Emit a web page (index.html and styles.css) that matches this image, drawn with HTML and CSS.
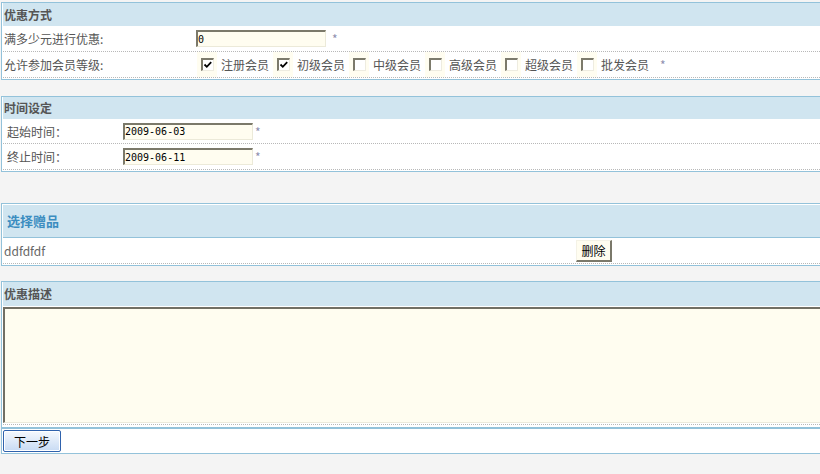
FILE: index.html
```html
<!DOCTYPE html>
<html lang="zh-CN">
<head>
<meta charset="utf-8">
<title>优惠设置</title>
<link rel="stylesheet" href="styles.css">
</head>
<body>
<div class="page">
  <div class="box box1">
    <div class="head">优惠方式</div>
    <div class="row r26">
      <div class="label lab1">满多少元进行优惠:</div>
      <div class="field"><input class="txt" value="0"><span class="req">*</span></div>
    </div>
    <div class="row r26">
      <div class="label lab1b">允许参加会员等级:</div>
      <div class="field levels">
        <span class="cbwrap"><span class="cb"><svg width="10" height="10" viewBox="0 0 10 10"><polyline points="1.5,4.5 3.8,6.8 8.2,2.2" fill="none" stroke="#000" stroke-width="1.8"/></svg></span></span><span class="lv">注册会员</span>
        <span class="cbwrap"><span class="cb"><svg width="10" height="10" viewBox="0 0 10 10"><polyline points="1.5,4.5 3.8,6.8 8.2,2.2" fill="none" stroke="#000" stroke-width="1.8"/></svg></span></span><span class="lv">初级会员</span>
        <span class="cbwrap"><span class="cb"></span></span><span class="lv">中级会员</span>
        <span class="cbwrap"><span class="cb"></span></span><span class="lv">高级会员</span>
        <span class="cbwrap"><span class="cb"></span></span><span class="lv">超级会员</span>
        <span class="cbwrap"><span class="cb"></span></span><span class="lv">批发会员</span>
        <span class="req req-lv">*</span>
      </div>
    </div>
  </div>

  <div class="box box2">
    <div class="head head22">时间设定</div>
    <div class="row r25">
      <div class="label lab2">起始时间：</div>
      <div class="field"><input class="txt" value="2009-06-03"><span class="req req2">*</span></div>
    </div>
    <div class="row r26">
      <div class="label lab2">终止时间：</div>
      <div class="field"><input class="txt" value="2009-06-11"><span class="req req2">*</span></div>
    </div>
  </div>

  <div class="box box3">
    <div class="head head-gift">选择赠品</div>
    <div class="row r26">
      <div class="label lab3">ddfdfdf</div>
      <div class="field"><button class="del" type="button">删除</button></div>
    </div>
  </div>

  <div class="box box4">
    <div class="head head24">优惠描述</div>
    <div class="desc"><textarea class="area"></textarea></div>
  </div>

  <div class="box box5">
    <div class="row r24"><button class="next" type="button">下一步</button></div>
  </div>
</div>
</body>
</html>
```

FILE: styles.css
```css
html, body {
  margin: 0;
  padding: 0;
}
body {
  background: #f4f4f4;
  font: 12px "Noto Sans CJK SC", "Liberation Sans", sans-serif;
  color: #555;
  overflow: hidden;
}
.page {
  width: 830px;
}
.box {
  margin-left: 1px;
  border: 1px solid #93c2da;
  background: #fff;
  padding: 0 1px 1px 1px;
}
.box1 { margin-top: 2px; }
.box2 { margin-top: 16px; }
.box3 { margin-top: 31px; padding-top: 1px; }
.box4 { margin-top: 15px; padding-bottom: 2px; }
.box5 { padding-bottom: 0; border-top-width: 1px; }

.head {
  background: #d0e5f0;
  font-weight: bold;
  color: #555;
  height: 23px;
  line-height: 23px;
  padding-left: 1px;
}
.head22 { height: 22px; line-height: 22px; }
.head24 { height: 24px; line-height: 24px; }
.head-gift {
  height: 33px;
  line-height: 32px;
  box-sizing: border-box;
  border-bottom: 1px solid #93c2da;
  padding-left: 4px;
  color: #3b8dc0;
  font-size: 13px;
}

.row {
  display: flex;
  align-items: center;
  box-sizing: border-box;
  border-bottom: 1px dotted #b8b8b8;
}
.r26 { height: 26px; }
.r25 { height: 25px; }
.r24 { height: 24px; border-bottom: 0; }

.label {
  flex: none;
  box-sizing: border-box;
  padding-left: 1px;
  white-space: nowrap;
}
.lab1 { width: 193px; }
.lab1b { width: 194px; }
.lab2 { width: 120px; padding-left: 4px; }
.lab3 { width: 573px; color: #666; }

.field {
  display: flex;
  align-items: center;
}

.txt {
  box-sizing: border-box;
  width: 130px;
  height: 17px;
  margin: 0;
  padding: 0;
  border-style: solid;
  border-width: 2px 1px 1px 2px;
  border-color: #7b796a #ecead9 #ecead9 #7b796a;
  background: #fffdf0;
  font: 10px "DejaVu Sans Mono", monospace;
  color: #000;
  outline: none;
}
.req {
  color: #8f8fb0;
  margin-left: 6px;
  font-size: 12px;
}
.req2 { margin-left: 2px; }

.levels {
  align-self: stretch;
}
.cbwrap {
  display: flex;
  align-items: center;
  align-self: stretch;
  background: #fffdf0;
  padding: 0 3px 0 4px;
}
.cb {
  display: flex;
  box-sizing: border-box;
  width: 13px;
  height: 13px;
  border-style: solid;
  border-width: 2px 1px 1px 2px;
  border-color: #7c7a6b #eeece0 #eeece0 #7c7a6b;
  background: #fff;
}
.lv {
  width: 48px;
  margin: 0 4px 0 4px;
  white-space: nowrap;
}
.req-lv { margin-left: 7px; }

.del {
  box-sizing: border-box;
  width: 36px;
  height: 22px;
  margin: 0;
  padding: 0;
  background: #fffdf0;
  border-style: solid;
  border-width: 1px 2px 2px 1px;
  border-color: #f4f2e6 #7a786a #7a786a #f4f2e6;
  font: 12px "Noto Sans CJK SC", sans-serif;
  color: #000;
}

.desc {
  padding: 1px 0 1px 0;
  border-bottom: 1px dotted #b8b8b8;
}
.area {
  display: block;
  box-sizing: border-box;
  width: 100%;
  height: 116px;
  margin: 0;
  border-style: solid;
  border-width: 2px 1px 1px 2px;
  border-color: #716f64 #eceadb #eceadb #716f64;
  background: #fffdf0;
  resize: none;
  outline: none;
}

.next {
  box-sizing: border-box;
  width: 58px;
  height: 22px;
  margin: 0;
  padding: 0;
  border: 1px solid #2f62ad;
  border-radius: 2px;
  box-shadow: inset 0 0 0 1px #fff;
  background: linear-gradient(#f5f9fe, #c8dbf3);
  font: 12px "Noto Sans CJK SC", sans-serif;
  color: #000;
}
```
